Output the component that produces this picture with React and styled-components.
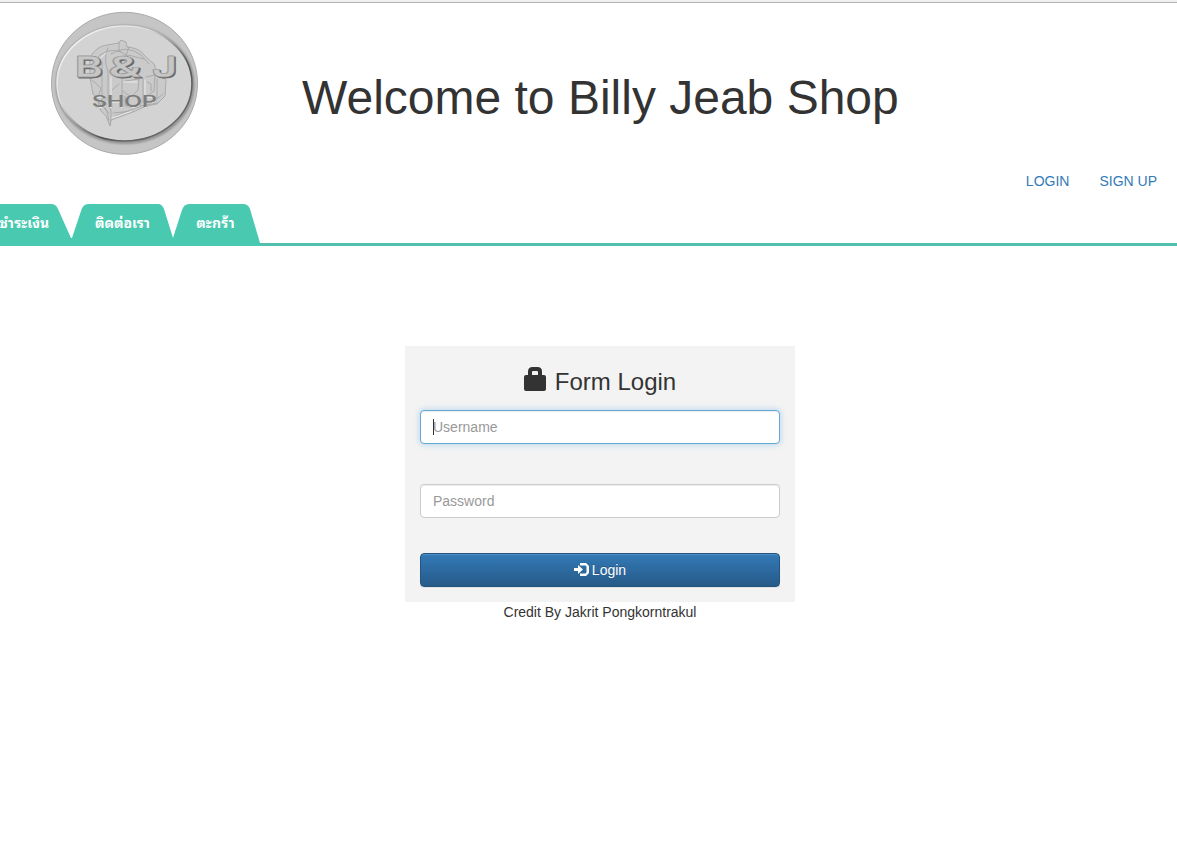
import React from 'react';
import styled, { createGlobalStyle } from 'styled-components';

const Global = createGlobalStyle`
  *, *::before, *::after { box-sizing: border-box; }
  body {
    margin: 0;
    background: #fff;
    color: #333;
    font: 14px/20px "Liberation Sans", Arial, sans-serif;
    overflow: hidden;
  }
`;

const Page = styled.div`
  display: flex;
  flex-direction: column;
  height: 857px;
  border-top: 2px solid #f0f0f0;
`;

const Header = styled.header`
  display: grid;
  grid-template-columns: 302px 1fr;
  height: 169px;
  border-top: 1px solid #b2b2b2;
`;

const Logo = styled.svg`
  display: block;
  width: 150px;
  height: 146px;
  margin: 7px 0 0 50px;
`;

const Title = styled.h1`
  margin: 66px 0 0;
  font-size: 48px;
  font-weight: 400;
  line-height: 57px;
  white-space: nowrap;
`;

const Account = styled.nav`
  display: flex;
  justify-content: flex-end;
  gap: 30px;
  height: 33px;
  padding-right: 20px;
`;

const AccountLink = styled.a`
  color: #337ab7;
  text-decoration: none;
`;

const Tabs = styled.nav`
  display: flex;
  height: 42px;
  border-bottom: 3px solid #52c0ad;
`;

const Tab = styled.a`
  flex: none;
  display: flex;
  align-items: center;
  justify-content: center;
  width: ${p => p.$width}px;
  height: 42px;
  margin-left: ${p => p.$offset || 0}px;
  padding: 0 ${p => p.$inset || 0}px 7px 0;
  background: #48c9b0;
  clip-path: path("${p => p.$shape}");
  color: #fff;
  font-family: "Noto Sans Thai Looped", "Noto Looped Thai", Loma, Waree, Garuda, "Noto Serif Thai", sans-serif;
  font-size: 14px;
  font-weight: 700;
  letter-spacing: ${p => p.$tracking || 0}px;
  white-space: nowrap;
`;

const Main = styled.main`
  display: flex;
  flex-direction: column;
  align-items: center;
  width: 1200px;
  padding-top: 100px;
`;

const Form = styled.form`
  display: flex;
  flex-direction: column;
  width: 390px;
  height: 256px;
  padding: 20px 15px 15px;
  background: #f3f3f3;
`;

const FormTitle = styled.h3`
  display: flex;
  justify-content: center;
  gap: 8px;
  height: 44px;
  margin: 0;
  font-size: 24px;
  font-weight: 400;
  line-height: 31px;
`;

const LockIcon = styled.svg`
  width: 23px;
  height: 26px;
`;

const Field = styled.input`
  width: 100%;
  height: 34px;
  margin: 0 0 ${p => p.$gap}px;
  padding: 6px 12px;
  border: 1px solid ${p => (p.$active ? '#64a9d8' : '#ccc')};
  border-radius: 4px;
  outline: 0;
  background: #fff;
  font: inherit;
  box-shadow: inset 0 1px 1px rgba(0, 0, 0, 0.075)${p => (p.$active ? ', 0 0 6px rgba(102, 175, 233, 0.5)' : '')};
  &::placeholder { color: #999; opacity: 1; }
`;

const ActiveField = styled.div`
  position: relative;
  &::after {
    content: "";
    position: absolute;
    left: 13px;
    top: 9px;
    width: 1px;
    height: 16px;
    background: #333;
  }
`;

const Submit = styled.button`
  display: flex;
  align-items: center;
  justify-content: center;
  gap: 3px;
  height: 34px;
  padding: 0;
  border: 1px solid #245580;
  border-radius: 4px;
  background: linear-gradient(#337ab7, #265a88);
  box-shadow: inset 0 1px 0 rgba(255, 255, 255, 0.15), 0 1px 1px rgba(0, 0, 0, 0.075);
  color: #fff;
  font: inherit;
  text-shadow: 0 -1px 0 rgba(0, 0, 0, 0.2);
`;

const EnterIcon = styled.svg`
  width: 15px;
  height: 14px;
`;

const Credit = styled.p`
  margin: 0;
`;

function Embossed({ x, y, stretch, size, children }) {
  return (
    <g transform={`translate(${x} ${y}) scale(${stretch} 1)`} fontSize={size}>
      <text x=".7" y=".9" fill="#666" stroke="#6c6c6c" strokeWidth="1">{children}</text>
      <text x="-.4" y="-.4" fill="#f0f0f0" stroke="#999" strokeWidth=".7">{children}</text>
      <text fill="#c6c6c6" stroke="#888" strokeWidth=".3">{children}</text>
    </g>
  );
}

function ShopLogo() {
  return (
    <Logo viewBox="50 10 150 146" role="img" aria-label="B&J Shop">
      <defs>
        <linearGradient id="rim" x1="0" y1="0" x2="1" y2="1">
          <stop offset="0" stopColor="#fff" />
          <stop offset=".35" stopColor="#ddd" />
          <stop offset=".65" stopColor="#555" />
          <stop offset="1" stopColor="#777" />
        </linearGradient>
        <filter id="soft"><feGaussianBlur stdDeviation="1" /></filter>
        <filter id="sketch"><feGaussianBlur stdDeviation=".35" /></filter>
      </defs>
      <ellipse cx="124.5" cy="83.3" rx="73" ry="71" fill="#c5c5c5" stroke="#aaa" />
      <ellipse cx="125" cy="84.5" rx="68" ry="58" fill="none" stroke="#888" strokeWidth="2.5" filter="url(#soft)" />
      <ellipse cx="124.5" cy="83.5" rx="67.5" ry="57.5" fill="#d3d3d3" stroke="url(#rim)" strokeWidth="1.6" />
      <g fill="none" stroke="#a6a6a6" strokeWidth=".9" strokeLinejoin="round" strokeLinecap="round" filter="url(#sketch)">
        <path fill="#cacaca" d="M90 58Q96 46 107 45L119 43 121 40 126 42 127 47Q140 48 145 56L154 64 158 74 166 80 165 96 157 104 146 106 133 112 111 120 110 126 106 116 101 111 97 99 93 94 90 78Z" />
        <path d="M94 61Q106 46 121 52M108 48Q103 58 108 72V100Q113 111 110 125M111 54Q126 44 141 55L149 64M119 42V51L126 55 129 47M115 60 128 55 144 59M92 80 101 88 97 101 109 113M95 99Q106 101 109 120M122 80V104M125 81 139 79 138 90 131 97 123 91M143 78V102M146 77 155 75 154 91 147 96M157 79V99L163 94M113 113 133 111M125 96V106L137 105M112 90 119 84M147 82 151 84V91M102 62V100M115 116 141 106 157 103" />
        <path stroke="#eee" d="M96 62 106 53M111 77V96M124 82H137M145 80V99M112 118 132 111" />
      </g>
      <g fontFamily="Inter, sans-serif" fontWeight="600" strokeLinejoin="round">
        <Embossed x={75} y={77} stretch={1.45} size={29}>B</Embossed>
        <Embossed x={108.5} y={77} stretch={1.7} size={29}>&amp;</Embossed>
        <Embossed x={152} y={77} stretch={1.5} size={29}>J</Embossed>
        <g stroke="#777" strokeWidth=".2" fontWeight="500">
          <text x="92.5" y="107.7" fontSize="15.5" textLength="65" lengthAdjust="spacingAndGlyphs" fill="#eee">SHOP</text>
          <text x="92" y="107" fontSize="15.5" textLength="65" lengthAdjust="spacingAndGlyphs" fill="#7c7c7c">SHOP</text>
        </g>
      </g>
    </Logo>
  );
}

export default function App() {
  return (
    <>
      <Global />
      <Page>
        <Header>
          <ShopLogo />
          <Title>Welcome to Billy Jeab Shop</Title>
        </Header>
        <Account>
          <AccountLink>LOGIN</AccountLink>
          <AccountLink>SIGN UP</AccountLink>
        </Account>
        <Tabs>
          <Tab $width={92} $offset={-20} $inset={3} $tracking={0.15} $shape="M0 0H71Q76 0 78 5L91 34H92V42H0Z">ชำระเงิน</Tab>
          <Tab $width={101} $shape="M0 34L9 7Q11 0 16 0H86Q90 0 92 5L101 34V42H0Z">ติดต่อเรา</Tab>
          <Tab $width={87} $inset={2} $tracking={0.2} $shape="M0 34L9 6Q11 0 16 0H70Q75 0 77 5L87 39V42H0Z">ตะกร้า</Tab>
        </Tabs>
        <Main>
          <Form onSubmit={e => e.preventDefault()}>
            <FormTitle>
              <LockIcon viewBox="0 0 23 26">
                <path fill="#333" fillRule="evenodd" d="M4 9V5.5Q4 1 8.5 1H13.5Q18 1 18 5.5V9H20Q22 9 22 11V23Q22 25 20 25H2Q0 25 0 23V11Q0 9 2 9ZM8 9H14V6Q14 5 13 5H9Q8 5 8 6Z" />
              </LockIcon>
              Form Login
            </FormTitle>
            <ActiveField>
              <Field $active $gap={40} placeholder="Username" />
            </ActiveField>
            <Field $gap={35} type="password" placeholder="Password" />
            <Submit>
              <EnterIcon viewBox="0 0 15 14">
                <path fill="#fff" d="M0 5H4V2L9 6.5 4 11V8H0ZM6 0H12L15 3V10L12 13H6V10.5H11.5L12.5 9.5V3.5L11.5 2.5H6Z" />
              </EnterIcon>
              Login
            </Submit>
          </Form>
          <Credit>Credit By Jakrit Pongkorntrakul</Credit>
        </Main>
      </Page>
    </>
  );
}
